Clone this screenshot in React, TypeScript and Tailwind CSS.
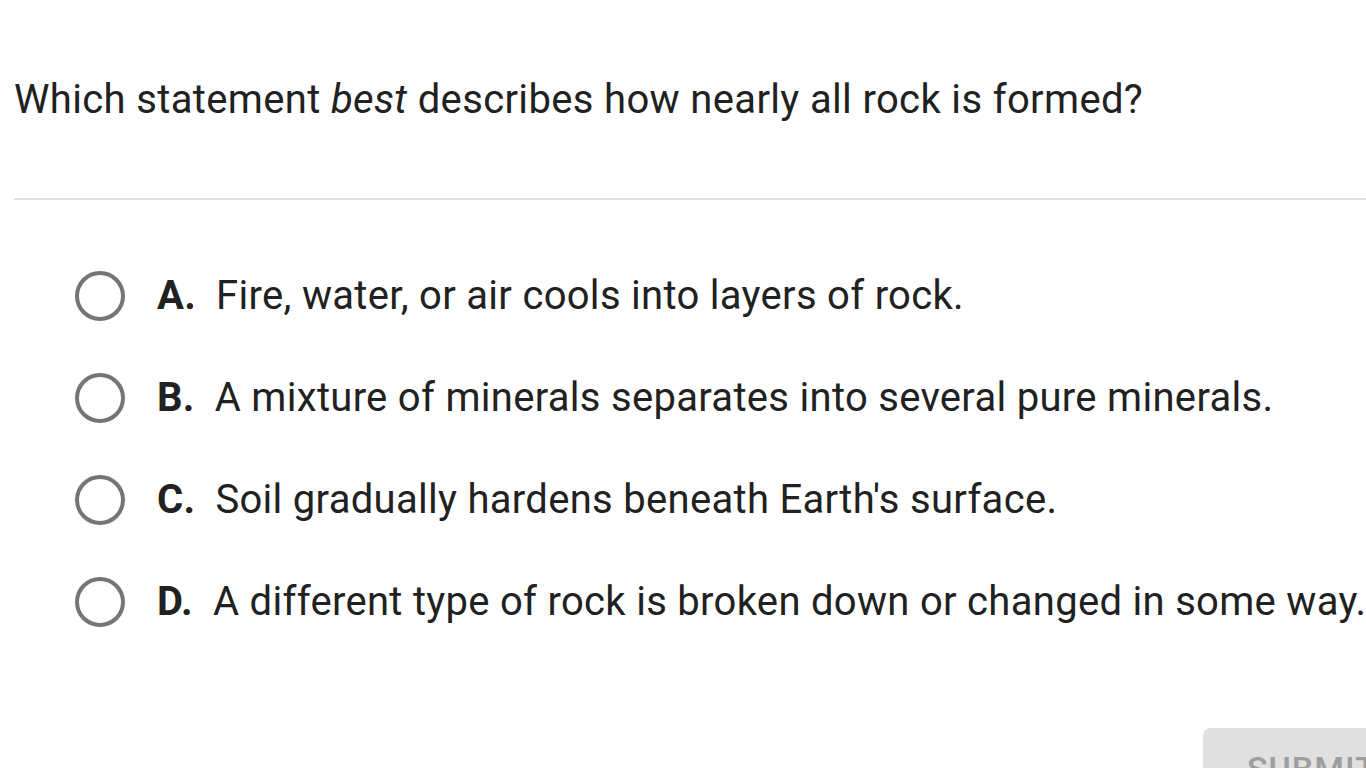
const options = [
  { letter: "A.", text: "Fire, water, or air cools into layers of rock." },
  { letter: "B.", text: "A mixture of minerals separates into several pure minerals." },
  { letter: "C.", text: "Soil gradually hardens beneath Earth's surface." },
  { letter: "D.", text: "A different type of rock is broken down or changed in some way." },
];

const App = () => {
  return (
    <div className="relative w-[1366px] h-[768px] overflow-hidden bg-white text-[#212121] font-['Roboto',sans-serif]">
      <div className="pl-[14px] pt-[74px]">
        <p className="text-[40px] leading-[52px] tracking-[0.35px] whitespace-nowrap">
          Which statement <em>best</em> describes how nearly all rock is formed?
        </p>
        <div className="mt-[72px] h-[2px] bg-[#e0e0e0]" />
      </div>

      <div className="flex flex-col pl-[75px] pt-[71px] gap-[52px]">
        {options.map((o) => (
          <div key={o.letter} className="flex items-center h-[50px] whitespace-nowrap tracking-[0.3px]">
            <span className="w-[50px] h-[50px] rounded-full border-[4px] border-[#757575] shrink-0" />
            <span className="ml-[32px] text-[40px] font-bold">{o.letter}</span>
            <span className="ml-[20px] text-[40px]">{o.text}</span>
          </div>
        ))}
      </div>

      <button className="absolute left-[1203px] top-[728px] w-[200px] h-[60px] rounded-[8px] bg-[#e0e0e0] text-[#9e9e9e] text-[34px] font-medium tracking-[1px] text-left pl-[44px] pt-[16px]">
        SUBMIT
      </button>
    </div>
  );
};

export default App;
